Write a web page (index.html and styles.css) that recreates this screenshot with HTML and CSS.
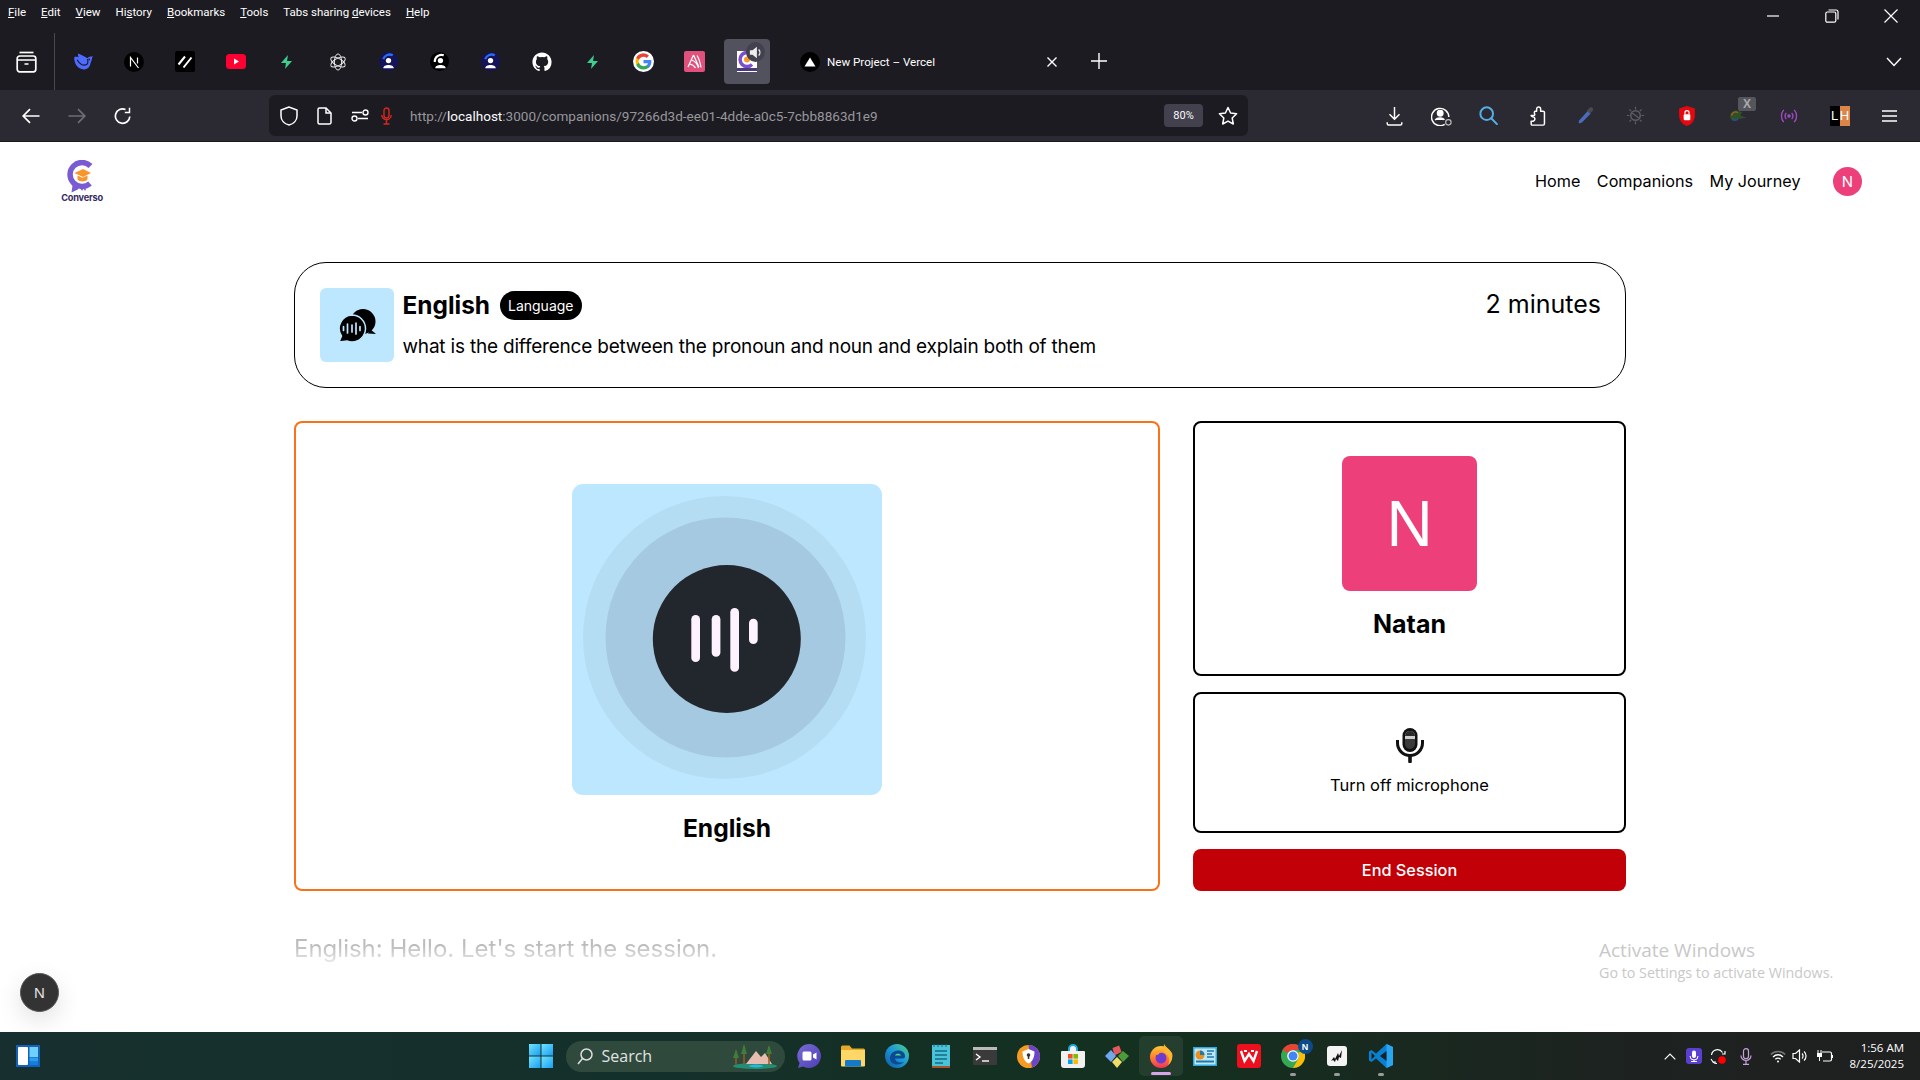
FILE: index.html
```html
<!DOCTYPE html>
<html lang="en">
<head>
<meta charset="utf-8">
<title>New Project – Vercel</title>
<link rel="stylesheet" href="styles.css">
</head>
<body>
<svg class="sprite" width="0" height="0" aria-hidden="true">
  <defs>
    <linearGradient id="winG" x1="0" y1="0" x2="1" y2="1"><stop offset="0" stop-color="#6fe3ff"/><stop offset="1" stop-color="#1a9df0"/></linearGradient>
    <linearGradient id="edgeG" x1="1" y1="0" x2="0" y2="1"><stop offset="0" stop-color="#4fd47f"/><stop offset=".45" stop-color="#1e9bd8"/><stop offset="1" stop-color="#0c59a4"/></linearGradient>
    <linearGradient id="foxG" x1="0" y1="0" x2="0" y2="1"><stop offset="0" stop-color="#ffc83c"/><stop offset=".55" stop-color="#ff7a2e"/><stop offset="1" stop-color="#f0325e"/></linearGradient>
    <linearGradient id="chatG" x1="0" y1="0" x2="1" y2="1"><stop offset="0" stop-color="#7b6bd8"/><stop offset="1" stop-color="#4c3fb0"/></linearGradient>
    <symbol id="bolt" viewBox="0 0 14 14"><path d="M8 0 1 8h5l-1 6 7-8H7z" fill="#3ecf8e"/></symbol>
    <symbol id="conv" viewBox="0 0 20 20"><circle cx="10" cy="10" r="10" fill="#15135a"/><path d="M14.500 3.500a7 7 0 0 0-10 4" fill="none" stroke="#2b6bf0" stroke-width="2.400"/><circle cx="10" cy="9" r="2.800" fill="#fff"/><path d="M4.500 17c0-4.500 11-4.500 11 0z" fill="#fff"/></symbol>
  </defs>
</svg>

<header class="browser">
  <div class="menu-row">
    <nav class="menu">
      <span><u>F</u>ile</span><span><u>E</u>dit</span><span><u>V</u>iew</span><span>Hi<u>s</u>tory</span><span><u>B</u>ookmarks</span><span><u>T</u>ools</span><span>Tabs sharing <u>d</u>evices</span><span><u>H</u>elp</span>
    </nav>
    <div class="win-controls">
      <span class="win-btn"><svg width="12" height="12" viewBox="0 0 12 12"><path d="M0 6h12" stroke="#fff" stroke-width="1.2"/></svg></span>
      <span class="win-btn"><svg width="14" height="14" viewBox="0 0 14 14" fill="none" stroke="#fff" stroke-width="1.2"><rect x=".8" y="3" width="10" height="10.2" rx="1.5"/><path d="M3.5 1h7.5a2 2 0 0 1 2 2v7.5"/></svg></span>
      <span class="win-btn"><svg width="14" height="14" viewBox="0 0 14 14"><path d="M.5.5l13 13M13.5.5l-13 13" stroke="#fff" stroke-width="1.2"/></svg></span>
    </div>
  </div>

  <div class="tab-row">
    <div class="side-btn"><svg width="21" height="22" viewBox="0 0 21 22" fill="none" stroke="#fff" stroke-width="1.7"><path d="M3.5 1.5h14"/><rect x="1.2" y="5" width="18.6" height="15.8" rx="2.5"/><path d="M1.2 9h18.6M8.5 13h4"/></svg></div>
    <div class="tab-sep"></div>
    <div class="pin"><svg width="20" height="17" viewBox="0 0 24 20"><path d="M23.500 3.500c-.7-.3-1 .3-1.500.7-1.500-.6-3.500.3-4.500 2C14 4.500 10 2 6 .5 5.500 3 7 5 7 5S3.500 3.500 1.500 5c-.5 8 5 15 12 14.500 4.500-.3 7-3.500 7.500-7 .2-1.800 1.500-3 2.500-9z" fill="#4d6bfe"/><path d="M5 8c3 6 8 8 12 5 1-.8 1-3 .5-6" fill="none" stroke="#1c1b22" stroke-width="1.400"/><circle cx="19.500" cy="7.500" r="1" fill="#1c1b22"/></svg></div>
    <div class="pin"><svg width="20" height="20" viewBox="0 0 20 20"><circle cx="10" cy="10" r="10" fill="#000"/><path d="M6.500 14.500v-9l8 10.500" fill="none" stroke="#fff" stroke-width="1.2"/><path d="M13.500 5.500v6" stroke="#fff" stroke-width="1.2"/></svg></div>
    <div class="pin"><svg width="20" height="21" viewBox="0 0 20 21"><rect width="20" height="21" rx="2" fill="#000"/><path d="M3.500 13.500 10 5.500M8.500 16.500l8-10" stroke="#fff" stroke-width="2"/></svg></div>
    <div class="pin"><svg width="20" height="15" viewBox="0 0 20 15"><rect width="20" height="15" rx="3.500" fill="#ff0033"/><path d="M8 4.500v6l5-3z" fill="#fff"/></svg></div>
    <div class="pin"><svg width="14" height="14"><use href="#bolt"/></svg></div>
    <div class="pin"><svg width="18" height="18" viewBox="0 0 20 20" fill="none" stroke="#e8e8e8" stroke-width="1.100"><ellipse cx="10" cy="10" rx="4" ry="9"/><ellipse cx="10" cy="10" rx="4" ry="9" transform="rotate(60 10 10)"/><ellipse cx="10" cy="10" rx="4" ry="9" transform="rotate(120 10 10)"/></svg></div>
    <div class="pin"><svg width="19" height="19"><use href="#conv"/></svg></div>
    <div class="pin"><svg width="19" height="19" viewBox="0 0 20 20"><circle cx="10" cy="10" r="10" fill="#000"/><path d="M14.500 3.500a7 7 0 0 0-9.500 7" fill="none" stroke="#fff" stroke-width="2.200"/><circle cx="11" cy="9" r="2.800" fill="#fff"/><path d="M5.500 17c0-4.500 11-4.500 11 0z" fill="#fff"/></svg></div>
    <div class="pin"><svg width="19" height="19"><use href="#conv"/></svg></div>
    <div class="pin"><svg width="20" height="20" viewBox="0 0 24 24"><path fill="#fff" d="M12 .5C5.650.5.5 5.650.5 12c0 5.080 3.290 9.390 7.860 10.910.58.1.79-.25.79-.56v-2c-3.200.7-3.870-1.540-3.870-1.540-.52-1.330-1.280-1.690-1.280-1.690-1.050-.72.08-.7.08-.7 1.160.08 1.770 1.190 1.770 1.190 1.030 1.760 2.700 1.250 3.360.96.1-.75.4-1.250.73-1.540-2.550-.29-5.240-1.280-5.240-5.680 0-1.250.45-2.280 1.190-3.080-.12-.29-.52-1.460.11-3.040 0 0 .97-.31 3.170 1.180a11 11 0 0 1 5.770 0c2.200-1.490 3.170-1.180 3.170-1.180.63 1.580.23 2.750.11 3.040.74.8 1.190 1.830 1.190 3.080 0 4.410-2.690 5.380-5.250 5.670.41.36.78 1.060.78 2.140v3.170c0 .31.21.67.8.56A11.500 11.500 0 0 0 23.500 12C23.500 5.650 18.350.5 12 .5z"/></svg></div>
    <div class="pin"><svg width="14" height="14"><use href="#bolt"/></svg></div>
    <div class="pin"><svg width="21" height="21" viewBox="0 0 24 24"><circle cx="12" cy="12" r="12" fill="#fff"/><path fill="#4285f4" d="M21 12.200c0-.7-.06-1.300-.17-1.900H12v3.600h5a4.300 4.300 0 0 1-1.850 2.800v2.300h3c1.750-1.600 2.850-4 2.850-6.800z"/><path fill="#34a853" d="M12 21c2.500 0 4.600-.83 6.150-2.250l-3-2.300c-.83.56-1.900.9-3.150.9-2.420 0-4.470-1.640-5.200-3.840H3.700v2.400A9 9 0 0 0 12 21z"/><path fill="#fbbc05" d="M6.800 13.510a5.400 5.400 0 0 1 0-3.420v-2.400H3.700a9 9 0 0 0 0 8.220z"/><path fill="#ea4335" d="M12 6.580c1.370 0 2.600.47 3.560 1.400l2.670-2.670A9 9 0 0 0 3.700 7.690l3.100 2.400C7.530 8.220 9.580 6.580 12 6.580z"/></svg></div>
    <div class="pin"><svg width="21" height="21" viewBox="0 0 21 21"><rect width="21" height="21" rx="2" fill="#e0527d"/><path d="M9.500 4 4 16M9.500 4 15 16M7.500 9c3 1 6 4 7 8M5.500 13c3 .5 5 2 6 4M13 4.500c2 3 3 6 4 12" fill="none" stroke="#fff" stroke-width="1.200"/></svg></div>
    <div class="pin-active">
      <svg width="20" height="21" viewBox="0 0 20 21"><rect width="20" height="21" fill="#fff"/><path d="M15 3.500a7 7 0 1 0 0 10" fill="none" stroke="#7a4fd0" stroke-width="3.500"/><circle cx="10" cy="8.500" r="3" fill="#f79a2e"/><rect x="0" y="17" width="20" height="3" fill="#4a3a80"/></svg>
      <span class="sound"><svg width="14" height="15" viewBox="0 0 16 16"><path d="M1 5.500h3L9 1.500v13L4 10.500H1z" fill="#eee"/><path d="M11 4.500a5 5 0 0 1 0 7" fill="none" stroke="#eee" stroke-width="1.500"/></svg></span>
    </div>
    <div class="tab">
      <svg width="20" height="20" viewBox="0 0 20 20"><circle cx="10" cy="10" r="10" fill="#000"/><path d="M10 5.500l5.500 9h-11z" fill="#fff"/></svg>
      <span class="tab-title">New Project – Vercel</span>
      <svg class="tab-close" width="12" height="12" viewBox="0 0 12 12"><path d="M1.500 1.500l9 9M10.500 1.500l-9 9" stroke="#fff" stroke-width="1.4"/></svg>
    </div>
    <svg class="new-tab" width="16" height="16" viewBox="0 0 16 16"><path d="M8 0v16M0 8h16" stroke="#fff" stroke-width="1.4"/></svg>
    <svg class="tab-list" width="16" height="10" viewBox="0 0 16 10"><path d="M1 1l7 7.500L15 1" fill="none" stroke="#fff" stroke-width="1.4"/></svg>
  </div>

  <div class="toolbar">
    <div class="nav-btn"><svg width="18" height="16" viewBox="0 0 18 16" fill="none" stroke="#fff" stroke-width="1.7"><path d="M17.500 8H1.500M8 1.200 1.200 8 8 14.800"/></svg></div>
    <div class="nav-btn fwd"><svg width="18" height="16" viewBox="0 0 18 16" fill="none" stroke="#6e6d75" stroke-width="1.7"><path d="M.5 8h16M10 1.200 16.800 8 10 14.800"/></svg></div>
    <div class="nav-btn"><svg width="18" height="18" viewBox="0 0 18 18" fill="none" stroke="#fff" stroke-width="1.7"><path d="M15.800 9.500A7.200 7.200 0 1 1 11.500 2.500"/><path d="M15.500 .8v4.700h-4.700" stroke-width="1.500"/></svg></div>
    <div class="url-bar">
      <svg class="u-shield" width="18" height="20" viewBox="0 0 18 20" fill="none" stroke="#fff" stroke-width="1.500"><path d="M9 1 1 4v6c0 4.500 3.500 8 8 9 4.500-1 8-4.500 8-9V4z"/></svg>
      <svg class="u-page" width="15" height="18" viewBox="0 0 15 18" fill="none" stroke="#fff" stroke-width="1.500"><path d="M1 2.500A1.500 1.500 0 0 1 2.500 1H9l5 5v9.500a1.500 1.500 0 0 1-1.500 1.500h-10A1.500 1.500 0 0 1 1 15.500z"/><path d="M9 1v5h5"/></svg>
      <svg class="u-perm" width="18" height="13" viewBox="0 0 18 13" fill="none" stroke="#fff" stroke-width="1.400"><path d="M1 3.500h10M7 9.500h10"/><circle cx="14.500" cy="3.500" r="2.500"/><circle cx="3.500" cy="9.500" r="2.500"/></svg>
      <svg class="u-mic" width="11" height="18" viewBox="0 0 11 18" fill="none" stroke="#d6281f" stroke-width="1.400"><rect x="3" y="1" width="5" height="10" rx="2.500"/><path d="M.8 8a4.700 4.700 0 0 0 9.400 0M5.500 13v4M2.500 17h6"/></svg>
      <span class="url-text">http://<b>localhost</b>:3000/companions/97266d3d-ee01-4dde-a0c5-7cbb8863d1e9</span>
      <span class="zoom-badge">80%</span>
      <svg class="u-star" width="20" height="20" viewBox="0 0 20 20" fill="none" stroke="#fff" stroke-width="1.500" stroke-linejoin="round"><path d="M10 1.500l2.600 5.500 6 .8-4.400 4.200 1.100 6L10 15.100 4.700 18l1.100-6L1.400 7.800l6-.8z"/></svg>
    </div>
    <div class="tools">
      <span class="tool-n"><svg width="17" height="20" viewBox="0 0 18 22" fill="none" stroke="#fff" stroke-width="1.600"><path d="M9 1v13M3.500 9 9 14.500 14.500 9M1 18v1.500A1.500 1.500 0 0 0 2.500 21h13a1.500 1.500 0 0 0 1.500-1.500V18"/></svg></span>
      <span class="tool-2"><svg width="22" height="20" viewBox="0 0 24 22" fill="none" stroke="#fff" stroke-width="1.600"><path d="M15 20.200A9.500 9.500 0 1 1 19.500 12"/><circle cx="10" cy="8" r="3" fill="#fff"/><path d="M4.500 15.500c2-3 9-3 10 0" fill="#fff"/><circle cx="19" cy="18" r="3" stroke="#bbb" stroke-width="1.300"/></svg></span>
      <span class="tool-n"><svg width="19" height="19" viewBox="0 0 21 21" fill="none" stroke="#55aee4" stroke-width="2.200"><circle cx="8.500" cy="8.500" r="7"/><path d="M13.500 13.500l6.300 6.500" stroke-linecap="round"/></svg></span>
      <span class="tool-n"><svg width="17" height="20" viewBox="0 0 18 23" fill="none" stroke="#fff" stroke-width="1.700" stroke-linejoin="round"><path d="M1.700 11h3c1 0 1.500-1 1-2C5 7.500 5.500 6 6.500 6H8V3.500a2.300 2.300 0 0 1 4.600 0V6h2.900c.8 0 1.500.7 1.500 1.500v12.500c0 1-.7 2-1.500 2H3c-.8 0-1.300-.7-1.300-1.500v-3h1.800a2.500 2.500 0 0 0 0-5z"/></svg></span>
      <span class="tool-n"><svg width="20" height="19" viewBox="0 0 20 20"><path d="M12 5l3 3-9 9c-1 1-2.500 1.500-3.500 1-.5-1 0-2.500 1-3.500z" fill="#4a6cbd"/><path d="M13 2.500c1-1.500 3-1.500 4-.5s.5 3-1 4l-2 2-3-3z" fill="#4a4a50"/></svg></span>
      <span><svg width="21" height="19" viewBox="0 0 22 22" fill="none" stroke="#5d5d66" stroke-width="1.700"><circle cx="11" cy="11" r="5.500"/><path d="M7 8l8 6M11 1v3M11 18v3M1 11h3M18 11h3M4 4l2 2M16 16l2 2M18 4l-2 2M6 16l-2 2" stroke-width="1.400"/></svg></span>
      <span><svg width="18" height="20" viewBox="0 0 19 24"><path d="M9.500 0 0 3v8c0 6 4 11 9.500 13C15 22 19 17 19 11V3z" fill="#e5080f"/><rect x="5.500" y="10" width="8" height="7" rx="1" fill="#fff"/><path d="M7 10V8a2.500 2.500 0 0 1 5 0v2" fill="none" stroke="#fff" stroke-width="1.400"/></svg></span>
      <span class="idm"><svg width="20" height="13" viewBox="0 0 24 18"><path d="M9 2A8 8 0 0 0 1 10c0 3 2 6 5 7l7-3 11-2-9-3 3-5z" fill="#2f5128"/><path d="M3 9c1-5 6-6 9-4" fill="none" stroke="#a0601f" stroke-width="2"/><path d="M4 13c3 3 6 3 8 1" fill="none" stroke="#2b4a9a" stroke-width="2"/></svg><b class="idm-x">X</b></span>
      <span><svg width="18" height="14" viewBox="0 0 20 16" fill="none" stroke="#a549c6" stroke-width="1.500"><path d="M4 1C.5 5 .5 11 4 15M16 1c3.500 4 3.500 10 0 14M7 4.500c-1.800 2-1.800 5 0 7M13 4.500c1.800 2 1.800 5 0 7"/><circle cx="10" cy="8" r="1.300" fill="#a549c6"/></svg></span>
      <span class="lh"><i class="lh-l">L</i><i class="lh-h">H</i></span>
      <span class="tool-last"><svg width="15" height="12" viewBox="0 0 15 12"><path d="M0 1h15M0 6h15M0 11h15" stroke="#fff" stroke-width="1.400"/></svg></span>
    </div>
  </div>
</header>

<div class="page">
  <nav class="site-nav">
    <a class="logo">
      <svg width="30" height="33" viewBox="0 0 30 33"><path d="M23.500 6A12 12 0 1 0 23 23.500" fill="none" stroke="#7a5cd2" stroke-width="5.500"/><path d="M6 22l-1.500 10.500L14 28z" fill="#7a5cd2"/><path d="M16 9 7.500 13l8.500 4 8-4z" fill="#f7962d"/><path d="M10.500 15.500v4c2 2.500 8 2.500 10 0v-4l-5 2.300z" fill="#f7962d"/><circle cx="12" cy="29.500" r=".9" fill="#fff"/><circle cx="15" cy="29.500" r=".9" fill="#7a5cd2"/><circle cx="18" cy="29.500" r=".9" fill="#7a5cd2"/></svg>
      <span class="logo-text">Converso</span>
    </a>
    <div class="nav-links">
      <a>Home</a><a>Companions</a><a>My Journey</a>
      <span class="user-dot">N</span>
    </div>
  </nav>

  <main class="session">
    <section class="info-bar">
      <div class="info-tile">
        <svg width="37" height="33" viewBox="0 0 37 33"><circle cx="24" cy="12.500" r="12.500" fill="#000"/><path d="M31 20l6 5-8-.5z" fill="#000"/><path d="M13 6a13.500 13.500 0 0 1 0 27c-2 0-3.500-.3-5-1l-8 1 2.500-6A13.500 13.500 0 0 1 13 6z" fill="#000" stroke="#bde7ff" stroke-width="1.500"/><path d="M4.500 17.500v4M8.500 15v9M13 16v7M17 14v11M21 17.500v4" stroke="#bde7ff" stroke-width="1.700" stroke-linecap="round"/></svg>
      </div>
      <div class="info-text">
        <div class="info-title"><h1>English</h1><span class="badge">Language</span></div>
        <p>what is the difference between the pronoun and noun and explain both of them</p>
      </div>
      <div class="info-time">2 minutes</div>
    </section>

    <section class="panels">
      <div class="agent-card">
        <svg class="agent-tile" width="310" height="311" viewBox="0 0 310 311">
          <rect width="310" height="311" rx="11" fill="#bde7ff"/>
          <circle cx="152.500" cy="153.500" r="141.500" fill="#b4ddf4"/>
          <circle cx="153.500" cy="153.500" r="120" fill="#a5c9e0"/>
          <circle cx="154.800" cy="155" r="74" fill="#22272e"/>
          <g fill="#fdf2ff"><rect x="119.300" y="131" width="8.700" height="47" rx="4.300"/><rect x="139.700" y="131" width="8.700" height="41.700" rx="4.300"/><rect x="158.300" y="124" width="8.700" height="63.700" rx="4.300"/><rect x="177" y="134.700" width="8.700" height="25.300" rx="4.300"/></g>
        </svg>
        <h2 class="agent-name">English</h2>
      </div>
      <div class="side">
        <div class="user-card">
          <div class="user-tile">N</div>
          <h2 class="user-name">Natan</h2>
        </div>
        <div class="mic-card">
          <svg width="28" height="35" viewBox="0 0 28 35"><path d="M1.500 12v3a12.500 12.500 0 0 0 25 0v-3" fill="none" stroke="#111" stroke-width="3"/><rect x="6.500" y="0" width="15" height="24" rx="7.500" fill="#111"/><rect x="9" y="3" width="10" height="18" rx="5" fill="#3b3b3b"/><path d="M9 8a5 5 0 0 1 10 0v3H9z" fill="#ccc"/><path d="M9 8a5 5 0 0 1 10 0H9z" fill="#2a2a2a"/><rect x="12.200" y="27" width="3.600" height="8" rx="1" fill="#111"/></svg>
          <span class="mic-label">Turn off microphone</span>
        </div>
        <button class="end-btn">End Session</button>
      </div>
    </section>

    <p class="transcript">English: Hello. Let's start the session.</p>
  </main>

  <div class="dev-badge">N</div>
  <div class="activate">
    <div class="act-1">Activate Windows</div>
    <div class="act-2">Go to Settings to activate Windows.</div>
  </div>
</div>

<footer class="taskbar">
  <div class="widgets"><svg width="24" height="22" viewBox="0 0 24 22"><rect width="24" height="22" fill="#1262b8"/><rect x="2" y="2" width="10" height="18" rx="1" fill="#fff"/><rect x="13.500" y="2" width="8.500" height="10" fill="#6fd0ff"/><rect x="13.500" y="12.500" width="8.500" height="4" fill="#2b9cf0"/><rect x="13.500" y="17" width="8.500" height="3" fill="#0f7fe0"/></svg></div>
  <div class="task-center">
    <span class="ti"><svg width="24" height="24" viewBox="0 0 24 24" fill="url(#winG)"><rect width="11.500" height="11.500"/><rect x="12.500" width="11.500" height="11.500"/><rect y="12.500" width="11.500" height="11.500"/><rect x="12.500" y="12.500" width="11.500" height="11.500"/></svg></span>
    <div class="search">
      <svg width="16" height="17" viewBox="0 0 16 17" fill="none" stroke="#ddd" stroke-width="1.500"><circle cx="9.500" cy="6.500" r="5.500"/><path d="M5.500 10.500 1 16"/></svg>
      <span class="search-text">Search</span>
      <svg class="search-art" width="46" height="26" viewBox="0 0 46 26"><ellipse cx="23" cy="23" rx="22" ry="3" fill="#1f8f78"/><path d="M14 21l10-13 5 6 4-4 7 11z" fill="#e6bdb0"/><path d="M12 22V3M4 22V8M37 22V4" stroke="#9a5a24" stroke-width="1.500"/><path d="M12 1l-3 10h6zM4 6l-3 9h6zM37 2l-3 9h6z" fill="#3f7d3a"/><ellipse cx="24" cy="23" rx="7" ry="1.500" fill="#2fb6d8"/></svg>
    </div>
    <span class="ti"><svg width="24" height="24" viewBox="0 0 24 24"><path d="M12 0a12 12 0 1 1-6 22.400L1 24l1.600-5A12 12 0 0 1 12 0z" fill="url(#chatG)"/><rect x="5.500" y="7.500" width="9" height="9" rx="1.500" fill="#fff"/><path d="M16 10.500l3.500-2v7l-3.500-2z" fill="#fff"/></svg></span>
    <span class="ti"><svg width="24" height="22" viewBox="0 0 24 22"><path d="M0 2a1.500 1.500 0 0 1 1.500-1.500h7l2.500 3h11.500A1.500 1.500 0 0 1 24 5v3H0z" fill="#e8a92b"/><path d="M0 5h24v15.500a1 1 0 0 1-1 1H1a1 1 0 0 1-1-1z" fill="#ffd766"/><rect x="4" y="15" width="16" height="6.500" rx="1" fill="#1578c9"/></svg></span>
    <span class="ti"><svg width="24" height="24" viewBox="0 0 24 24"><circle cx="12" cy="12" r="12" fill="url(#edgeG)"/><path d="M5 15c-.5-5 4-9 9-8.500 4 .5 6 3 6 6 0 1.500-1 2-3 2h-7c0 3 3.500 5 9 3.500-3 3.500-13 4-14-3z" fill="#0c4a94"/><path d="M10 11.500c.5-2.500 5.500-2.500 6 0z" fill="#4fd47f"/></svg></span>
    <span class="ti"><svg width="18" height="24" viewBox="0 0 18 24"><rect y="1" width="18" height="22" fill="#49c3d8"/><rect y="22" width="18" height="2" fill="#a8542a"/><path d="M3 7h12M3 11h12M3 15h12M3 19h8" stroke="#176a86" stroke-width="1.500"/><path d="M2 0v3M6 0v3M10 0v3M14 0v3" stroke="#176a86"/></svg></span>
    <span class="ti"><svg width="24" height="18" viewBox="0 0 24 18"><rect width="24" height="18" rx="1" fill="#3a3a3a"/><rect width="24" height="3" fill="#bbb"/><path d="M3 7l4 3-4 3" fill="none" stroke="#fff" stroke-width="1.4"/><path d="M9 14h7" stroke="#fff" stroke-width="1.4"/></svg></span>
    <span class="ti"><svg width="23" height="23" viewBox="0 0 23 23"><circle cx="11.500" cy="11.500" r="11.500" fill="#f59a23"/><path d="M11.500 0a11.500 11.500 0 0 1 11.500 11.500 11.500 11.500 0 0 1-8 11z" fill="#6b45c8"/><path d="M11.500 4l6 2.500c0 6-2 10-6 12-4-2-6-6-6-12z" fill="#fff"/><circle cx="11.500" cy="10" r="1.800" fill="#333"/><rect x="10.800" y="10" width="1.500" height="4" fill="#333"/></svg></span>
    <span class="ti"><svg width="24" height="24" viewBox="0 0 24 24"><path d="M8 5a4 4 0 0 1 8 0v2h7a1 1 0 0 1 1 1v13a3 3 0 0 1-3 3H3a3 3 0 0 1-3-3V8a1 1 0 0 1 1-1h7z" fill="#f1f1f1"/><path d="M8 7V5a4 4 0 0 1 8 0v2" fill="none" stroke="#1ca8e0" stroke-width="2"/><rect x="7" y="10" width="4.600" height="4.600" fill="#f25022"/><rect x="12.400" y="10" width="4.600" height="4.600" fill="#7fba00"/><rect x="7" y="15.400" width="4.600" height="4.600" fill="#00a4ef"/><rect x="12.400" y="15.400" width="4.600" height="4.600" fill="#ffb900"/></svg></span>
    <span class="ti"><svg width="24" height="24" viewBox="0 0 24 24"><path d="M12 1l5 5-5 6-5-6z" fill="#e2585f" transform="rotate(25 12 6)"/><path d="M0 12l6-6 5 6-5 6z" fill="#6fa8f0"/><path d="M13 12l5-5 6 5-6 6z" fill="#4c9a3a"/><path d="M7 18l5-5 5 5-5 6z" fill="#efdc6a"/></svg></span>
    <span class="ti ti-active"><svg width="24" height="24" viewBox="0 0 24 24"><circle cx="12" cy="13" r="11" fill="url(#foxG)"/><path d="M15 0c1.500 3 5 5 8 9 1.500 5-1 10-4 12 3-6 0-11-4-13-1-3 0-5 0-8z" fill="#ffb52e"/><circle cx="12" cy="14" r="5.500" fill="#6e3bd0"/><path d="M4 9c3-3 9-3 12-1-3-.5-6 .5-7 3z" fill="#ffa31f"/></svg><i class="active-bar"></i></span>
    <span class="ti"><svg width="24" height="19" viewBox="0 0 24 19"><rect width="24" height="19" fill="#2eaadc"/><rect x="1.500" y="1.500" width="21" height="16" fill="#bfe6f5"/><circle cx="7" cy="8" r="4.500" fill="#ee8f1d"/><path d="M7 8V3.500A4.500 4.500 0 0 1 11.500 8z" fill="#1a7bb0"/><path d="M14 4h7M14 7h5M14 10h7" stroke="#1a7bb0" stroke-width="1.500"/><path d="M3 14.500h18" stroke="#1a7bb0" stroke-width="2"/></svg></span>
    <span class="ti"><svg width="24" height="24" viewBox="0 0 24 24"><rect width="24" height="24" rx="3" fill="#ee0f1e"/><path d="M4 7l3.500 10L12 10l4.500 7L20 7" fill="none" stroke="#fff" stroke-width="2.400"/><path d="M7 7h10" stroke="#fff" stroke-width="2" stroke-dasharray="3 4"/></svg></span>
    <span class="ti"><svg width="24" height="24" viewBox="0 0 24 24"><circle cx="12" cy="12" r="12" fill="#34a853"/><path d="M12 0a12 12 0 0 1 10.400 6H12a6 6 0 0 0-5.200 3L1.600 6A12 12 0 0 1 12 0z" fill="#ea4335"/><path d="M22.400 6A12 12 0 0 1 12 24l5.200-9A6 6 0 0 0 17 9z" fill="#fbbc05"/><circle cx="12" cy="12" r="5.800" fill="#fff"/><circle cx="12" cy="12" r="4.500" fill="#4285f4"/></svg><b class="chrome-n">N</b><i class="run-bar"></i></span>
    <span class="ti"><svg width="20" height="20" viewBox="0 0 20 20"><rect width="20" height="20" rx="3" fill="#f4f4f4"/><path d="M4 15l3-4 1 2 3-6 1 3 3-6-1 8-2-1-1 4-2-2-1 3-2-2z" fill="#111"/></svg><i class="run-bar"></i></span>
    <span class="ti"><svg width="24" height="24" viewBox="0 0 24 24"><path d="M17.500 0 24 3v18l-6.500 3L7 14.500 2.500 18 0 16.500V7.500L2.500 6 7 9.500z" fill="#0b7fd0"/><path d="M17.500 0 24 3v18l-6.500 3z" fill="#2aa6ee"/><path d="M17.500 7 11 12l6.500 5z" fill="#14222b"/><path d="M2.500 8.500v7L6 12z" fill="#14222b"/></svg><i class="run-bar"></i></span>
  </div>
  <div class="tray">
    <span class="tr tr-chev"><svg width="12" height="7" viewBox="0 0 12 7"><path d="M.7 6.300 6 1l5.300 5.300" fill="none" stroke="#fff" stroke-width="1.2"/></svg></span>
    <span class="tr"><svg width="16" height="16" viewBox="0 0 16 16"><rect width="16" height="16" rx="3" fill="#5b3fd0"/><rect x="6" y="2.500" width="4" height="7.500" rx="2" fill="#fff"/><path d="M4 8a4 4 0 0 0 8 0M8 12v1.500M5 13.500h6" fill="none" stroke="#fff"/></svg></span>
    <span class="tr"><svg width="17" height="17" viewBox="0 0 17 17" fill="none" stroke="#fff" stroke-width="1.2"><path d="M1.500 7a6 6 0 0 1 11-2.500M15 3v3h-3M1 11l2 3h3"/><path d="M3 14a6 6 0 0 0 4 1.500"/><circle cx="12" cy="12" r="3.800" fill="#f00" stroke="none"/></svg></span>
    <span class="tr tr-mic"><svg width="12" height="17" viewBox="0 0 12 17" fill="none" stroke="#c9a0dc" stroke-width="1.2"><rect x="3.500" y=".7" width="5" height="10" rx="2.500"/><path d="M1 7.500a5 5 0 0 0 10 0M6 12.500v3.500M3 16.300h6"/></svg></span>
    <span class="tr tr-wifi"><svg width="16" height="13" viewBox="0 0 16 13" fill="none" stroke="#fff" stroke-width="1.3"><path d="M.8 4.500c4-4 10.400-4 14.400 0" stroke="#777"/><path d="M3 7c3-3 7-3 10 0M5.300 9.300c1.500-1.300 3.900-1.300 5.400 0"/><circle cx="8" cy="11.500" r="1" fill="#fff" stroke="none"/></svg></span>
    <span class="tr tr-vol"><svg width="16" height="14" viewBox="0 0 16 14" fill="none" stroke="#fff" stroke-width="1.2"><path d="M1 4.500h2.500L7.500 1v12L3.500 9.500H1z"/><path d="M10 4.500a3.500 3.500 0 0 1 0 5M12 2.500a6 6 0 0 1 0 9"/></svg></span>
    <span class="tr tr-bat"><svg width="16" height="13" viewBox="0 0 16 13"><path d="M5 2h8a1.500 1.500 0 0 1 1.500 1.500v6A1.500 1.500 0 0 1 13 11H6" fill="none" stroke="#fff" stroke-width="1.2"/><rect x="14.500" y="5" width="1.500" height="3" fill="#fff"/><rect x="0" y="3" width="5" height="4" fill="#fff"/><path d="M1 0v3M4 0v3M2.500 7v4" stroke="#fff"/></svg></span>
    <div class="clock"><span>1:56 AM</span><span>8/25/2025</span></div>
  </div>
</footer>
</body>
</html>
```
FILE: styles.css
```css
* { box-sizing: border-box; }
html, body { margin: 0; padding: 0; }
body {
  width: 1920px; height: 1080px; overflow: hidden; display: flex; flex-direction: column;
  background: #fff; color: #000; font-family: Inter, "Liberation Sans", sans-serif;
}
.sprite { position: absolute; }
svg { display: block; flex: none; }

/* browser chrome */
.browser { flex: none; height: 142px; background: #1c1b22; color: #fff; font-family: Roboto, sans-serif; }
.menu-row { height: 24px; display: flex; align-items: center; }
.menu { display: flex; gap: 15px; padding-left: 8px; font-size: 11.5px; }
.win-controls { margin-left: auto; display: flex; margin-top: 8px; }
.win-btn { width: 59px; height: 24px; display: flex; align-items: center; justify-content: center; }

.tab-row { height: 66px; display: flex; align-items: flex-start; padding-top: 15px; position: relative; }
.side-btn { width: 52px; height: 45px; display: flex; align-items: center; justify-content: center; }
.tab-sep { width: 1px; height: 57px; margin: -6px 2px 0 2px; background: #4a4950; }
.pin { width: 51px; height: 45px; display: flex; align-items: center; justify-content: center; }
.pin-active { width: 46px; height: 45px; margin-left: 4px; background: #52525e; border-radius: 4px; display: flex; align-items: center; justify-content: center; position: relative; }
.sound { position: absolute; top: 3px; right: 5px; width: 19px; height: 20px; border-radius: 50%; background: #42414d; display: flex; align-items: center; justify-content: center; }
.tab { width: 305px; height: 45px; display: flex; align-items: center; padding: 0 17px 0 30px; gap: 7px; }
.tab-title { font-size: 11.6px; }
.tab-close { margin-left: auto; }
.new-tab { margin: 14px 0 0 16px; }
.tab-list { margin: 18px 18px 0 auto; }

.toolbar { height: 51px; background: #2b2a33; display: flex; align-items: center; padding-left: 8px; }
.nav-btn { width: 46px; height: 40px; display: flex; align-items: center; justify-content: center; }
.fwd { padding-right: 1px; }
.url-bar { width: 979px; height: 41px; margin-left: 123px; background: #1c1b22; border-radius: 6px; display: flex; align-items: center; padding: 0 10px 0 11px; }
.u-page { margin-left: 19px; }
.u-perm { margin-left: 19px; }
.u-mic { margin-left: 12px; }
.url-text { margin-left: 18px; font-size: 13.55px; color: #97979b; white-space: nowrap; }
.url-text b { font-weight: 400; color: #fbfbfe; }
.zoom-badge { margin-left: auto; width: 39px; height: 23px; border-radius: 4px; background: #42414d; font-size: 11px; display: flex; align-items: center; justify-content: center; color: #fbfbfe; }
.u-star { margin-left: 15px; }
.tools { margin-left: auto; padding-right: 6px; display: flex; }
.tools > span { width: 51px; height: 40px; display: flex; align-items: center; justify-content: center; position: relative; }
.tools > .tool-n { width: 48.5px; }
.tools > .tool-2 { width: 46px; }
.tools > .tool-last { width: 49px; }
.idm-x { position: absolute; top: 1px; right: 7px; width: 18px; height: 14px; background: #55555c; border-radius: 2px; color: #aaa; font: 700 12px "Liberation Sans", sans-serif; display: flex; align-items: center; justify-content: center; }
.lh-l, .lh-h { width: 10px; height: 20px; font: 400 13px "Liberation Sans", sans-serif; display: flex; align-items: center; justify-content: center; color: #fff; }
.lh-l { background: #000; }
.lh-h { background: #dc8546; }

/* page */
.page { flex: none; height: 890px; position: relative; overflow: hidden; background: #fff; }
.site-nav { height: 78px; display: flex; align-items: center; justify-content: space-between; padding: 0 58px 0 60px; }
.logo { display: flex; flex-direction: column; align-items: center; width: 44px; }
.logo-text { font-size: 9.2px; font-weight: 700; line-height: 10px; color: #34285f; letter-spacing: -0.2px; }
.nav-links { display: flex; align-items: center; gap: 16.5px; font-size: 16.2px; font-weight: 400; }
.user-dot { width: 29px; height: 29px; margin-left: 16px; border-radius: 50%; background: #ed3f7a; color: #fff; font-size: 15px; display: flex; align-items: center; justify-content: center; }

.session { width: 1332px; margin: 42px auto 0; }
.info-bar { height: 126px; border: 1px solid #000; border-radius: 32px; padding: 25px 24px 25px 25px; display: flex; gap: 8px; }
.info-tile { width: 74px; height: 74px; border-radius: 6px; background: #bde7ff; display: flex; align-items: center; justify-content: center; }
.info-text { flex: 1; }
.info-title { display: flex; align-items: center; gap: 10px; height: 34px; margin-top: 0; }
.info-title h1 { margin: 0 0 0 .5px; font-size: 24.4px; font-weight: 700; }
.badge { height: 29px; padding: 0 8px; border-radius: 15px; background: #000; color: #fff; font-size: 14px; display: flex; align-items: center; }
.info-text p { margin: 13px 0 0 .5px; font-size: 19px; line-height: 24px; letter-spacing: -0.2px; }
.info-time { font-size: 25px; line-height: 30px; margin-top: 1px; }

.panels { margin-top: 33px; height: 470px; display: grid; grid-template-columns: 866px 433px; column-gap: 33px; }
.agent-card { border: 2px solid #f97316; border-radius: 8px; padding-top: 61px; display: flex; flex-direction: column; align-items: center; }
.agent-name { margin: 17px 0 0; font-size: 24.6px; line-height: 32px; font-weight: 700; }
.side { display: flex; flex-direction: column; gap: 16px; }
.user-card { height: 255px; border: 2px solid #000; border-radius: 8px; padding-top: 33px; display: flex; flex-direction: column; align-items: center; }
.user-tile { width: 135px; height: 135px; border-radius: 8px; background: #ed3f7a; color: #fff; font: 400 64px "Liberation Sans", sans-serif; display: flex; align-items: center; justify-content: center; }
.user-name { margin: 17px 0 0; font-size: 25px; line-height: 32px; font-weight: 700; }
.mic-card { height: 141px; border: 2px solid #000; border-radius: 8px; padding-top: 34px; display: flex; flex-direction: column; align-items: center; gap: 12px; }
.mic-label { font-size: 16.5px; line-height: 20px; }
.end-btn { height: 42px; padding-bottom: 1px; border: 0; border-radius: 8px; background: #c10007; color: #fff; font: 500 16.3px Inter, sans-serif; }

.transcript { margin: 41px 0 0; font-size: 24px; line-height: 34px; background: linear-gradient(#bcbcbc 40%, #e8e8e8 90%); -webkit-background-clip: text; background-clip: text; color: transparent; }

.dev-badge { position: absolute; left: 20px; top: 831px; width: 39px; height: 39px; border-radius: 50%; background: #333; border: 1px solid #555; color: #e4e4e4; font: 400 15px "Liberation Sans", sans-serif; display: flex; align-items: center; justify-content: center; box-shadow: 0 8px 24px rgba(0,0,0,.12); }
.activate { position: absolute; left: 1599px; top: 796px; color: #c8c8c8; font-family: "Open Sans", sans-serif; }
.act-1 { font-size: 19px; line-height: 24px; }
.act-2 { font-size: 14.3px; line-height: 21px; }

/* taskbar */
.taskbar { flex: none; height: 48px; display: flex; align-items: center; background: linear-gradient(90deg, #17302f 0%, #14302a 35%, #14301f 60%, #1d2220 85%, #1f2020 100%); color: #fff; font-family: "Open Sans", sans-serif; }
.widgets { padding-left: 16px; }
.task-center { margin-left: 478.5px; display: flex; align-items: center; }
.ti { width: 44px; height: 40px; display: flex; align-items: center; justify-content: center; position: relative; }
.ti-active { background: rgba(255,255,255,.07); border-radius: 5px; }
.active-bar { position: absolute; bottom: 1px; left: 12px; width: 20px; height: 3px; border-radius: 2px; background: #d8a6e6; }
.run-bar { position: absolute; bottom: 0; left: 19px; width: 6px; height: 3px; border-radius: 2px; background: #9a9a9a; }
.chrome-n { position: absolute; top: 3px; right: 2px; width: 15px; height: 15px; border-radius: 50%; background: #0d4a8a; font: 700 9px "Liberation Sans", sans-serif; display: flex; align-items: center; justify-content: center; }
.search { width: 219px; height: 31px; margin: 0 2px 0 3px; border-radius: 16px; background: #2f4a3c; display: flex; align-items: center; padding-left: 11px; gap: 9px; }
.search-text { font-size: 16px; color: #e2e2e2; }
.search-art { margin-left: auto; margin-right: 7px; }
.tray { margin-left: auto; padding-right: 16px; display: flex; align-items: center; }
.tr { width: 24px; display: flex; justify-content: center; }
.tr-mic { margin-left: 4px; }
.tr-wifi { margin-left: 8px; }
.tr-vol { margin-left: -2px; }
.tr-bat { margin-left: 1px; }
.clock { display: flex; flex-direction: column; align-items: flex-end; font-size: 11.5px; line-height: 16px; margin-left: 9px; width: 58px; }
```
